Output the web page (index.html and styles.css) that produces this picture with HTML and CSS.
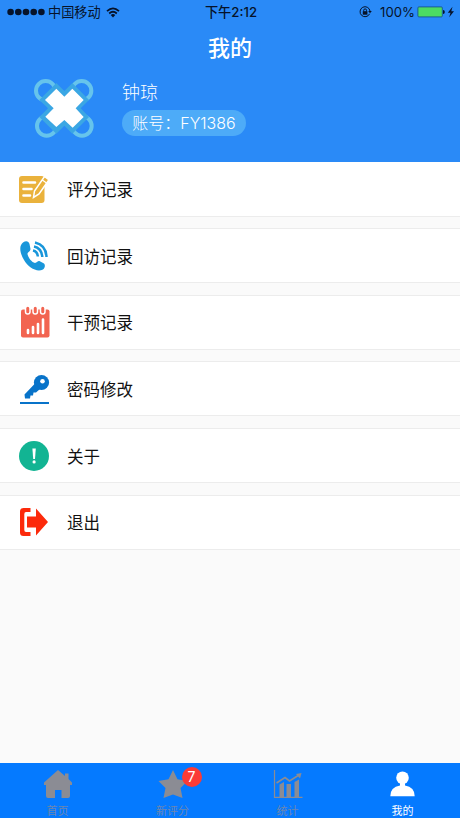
FILE: index.html
```html
<!DOCTYPE html>
<html lang="zh-CN">
<head>
<meta charset="utf-8">
<meta name="viewport" content="width=device-width, initial-scale=1">
<title>我的</title>
<link rel="stylesheet" href="styles.css">
</head>
<body>
<div class="app">
  <header class="header">
    <div class="status">
      <div class="status-left">
        <svg width="38" height="8" viewBox="0 0 38 8"><circle cx="3.6" cy="4" r="3.3"/><circle cx="11.3" cy="4" r="3.3"/><circle cx="19" cy="4" r="3.3"/><circle cx="26.7" cy="4" r="3.3"/><circle cx="34.4" cy="4" r="3.3"/></svg>
        <span class="carrier">中国移动</span>
        <svg class="wifi" width="14" height="11" viewBox="0 0 14 11"><path d="M1 4.2Q7-1.4 13 4.2M3.2 6.5Q7 3 10.8 6.5" fill="none" stroke="#06132a" stroke-width="1.7"/><path d="M4.7 8Q7 6.2 9.3 8L7 10.4Z"/></svg>
      </div>
      <span class="time">下午2:12</span>
      <div class="status-right">
        <svg width="13" height="12" viewBox="0 0 13 12"><path d="M10.6 7.8A5 5 0 1 1 11 5" fill="none" stroke="#06132a" stroke-width="1"/><path d="M9.2 5H12.8L11 7.2Z"/><rect x="3.8" y="5.2" width="4.6" height="3.5"/><path d="M4.7 5.5V4.3a1.4 1.4 0 0 1 2.8 0v1.2" fill="none" stroke="#06132a"/></svg>
        <span class="percent">100%</span>
        <svg width="38" height="12" viewBox="0 0 38 12"><rect x=".9" y=".9" width="24.4" height="10" rx="1" fill="#4cdb62" stroke="#17558e" stroke-width=".9"/><path d="M26 4Q27.8 4.2 27.8 6T26 8Z"/><path d="M35.5 .8 30.8 6.7H33.5L32.2 11.2 37 5.2H34.300Z"/></svg>
      </div>
    </div>
    <h1 class="title">我的</h1>
    <div class="profile">
      <svg class="avatar" width="68" height="68" viewBox="0 0 204 204">
        <g fill="none" stroke="#66c4ec" stroke-width="12"><circle cx="47" cy="50" r="29"/><circle cx="155" cy="50" r="29"/><circle cx="50" cy="156" r="29"/><circle cx="156" cy="156" r="29"/></g>
        <path d="M79 27 103 51 127 27 177 78 152 103 177 129 127 179 103 155 79 179 28 129 54 103 28 78Z" fill="#3ba7e4"/>
        <path d="M79 44 103 68 127 44 161 78 137 103 161 129 128 161 103 138 79 159 46 128 71 103 45 78Z" fill="#fff"/>
      </svg>
      <div class="identity">
        <div class="name">钟琼</div>
        <div class="account">账号：FY1386</div>
      </div>
    </div>
  </header>
  <main class="menu">
    <div class="row">
      <svg class="icon" viewBox="0 0 32 32"><rect x="1" y="3" width="25.500" height="27" rx="3" fill="#eab23c"/><path d="M5.500 9.5H17M5.500 16H13.5M5.500 22.5H12" stroke="#fff" stroke-width="2.6" stroke-linecap="round"/><path d="M26.500 3.500 31 6.800 21 21 15.500 24.500 16.500 18Z" fill="#eab23c" stroke="#fff" stroke-width="1.5"/><path d="M24 6.800 28.500 10" stroke="#fff" stroke-width="1.2"/></svg>
      <span>评分记录</span>
    </div>
    <div class="row">
      <svg class="icon" viewBox="0 0 32 32"><path d="M5 2.500C8 .5 10.500 1 11.500 4L12.500 9C12.500 11.500 9.500 12 9.500 14C10 17.500 14 22.500 17 23C19 23 19.500 20.500 21.800 21.200L26 23.500C27.500 25 27 28 25 29.500C18.500 32.500 10.500 27.500 6 20C1.500 12.500 1 5.500 5 2.500Z" fill="#1996da"/><g fill="none" stroke="#1996da" stroke-width="2.500"><path d="M15 10.500Q19.500 11.500 19.800 16.500"/><path d="M16 6.500Q23.500 8 24.300 17"/><path d="M17 2.500Q28 5 28.500 17"/></g></svg>
      <span>回访记录</span>
    </div>
    <div class="row">
      <svg class="icon" viewBox="0 0 32 32"><rect x="3" y="3.500" width="28.500" height="28" rx="2" fill="#f26450"/><g fill="#f26450" stroke="#fff" stroke-width="1.500"><rect x="7.500" y="0" width="4.500" height="8" rx="2.250"/><rect x="15" y="0" width="4.500" height="8" rx="2.250"/><rect x="22.500" y="0" width="4.500" height="8" rx="2.250"/></g><path d="M10 24V27M15 21V27M20 18V27M25 13.500V27" stroke="#fff" stroke-width="2.600" stroke-linecap="round"/></svg>
      <span>干预记录</span>
    </div>
    <div class="row">
      <svg class="icon" viewBox="0 0 32 32"><circle cx="23.500" cy="9.500" r="7.600" fill="#0873c9"/><path d="M17 10.500 6.500 21.500 7 25.500H12L12.500 22.500H15L15.500 19.500H18L22 16Z" fill="#0873c9"/><circle cx="24.500" cy="8.300" r="2.300" fill="#fff"/><path d="M2 30H31" stroke="#0873c9" stroke-width="2"/></svg>
      <span>密码修改</span>
    </div>
    <div class="row">
      <svg class="icon" viewBox="0 0 32 32"><circle cx="16" cy="16" r="15" fill="#12b493"/><path d="M14.400 8.500H17.800L17 19H15.200Z" fill="#fff"/><circle cx="16.100" cy="21.900" r="1.600" fill="#fff"/></svg>
      <span>关于</span>
    </div>
    <div class="row">
      <svg class="icon" viewBox="0 0 32 32"><path d="M12.500 2H5.500Q2 2 2 5.500V26.500Q2 30 5.500 30H12.500V26H8Q6.300 26 6.300 24V8Q6.300 6 8 6H12.500Z" fill="#fc2a0b"/><path d="M9 10.500H18V2.500L30 16 18 29.500V21.500H9Z" fill="#fc2a0b"/></svg>
      <span>退出</span>
    </div>
  </main>
  <nav class="tabs">
    <div class="tab">
      <svg width="30" height="30" viewBox="0 0 30 30"><path d="M15 1 22 7V4.500H25.500V10L29 13.500V16H27V27Q27 29 25 29H18.500V21H12V29H5Q3 29 3 27V16H1V13.500Z"/></svg>
      <span>首页</span>
    </div>
    <div class="tab">
      <div class="badge-anchor"><svg width="30" height="30" viewBox="0 0 30 30"><path d="M15 1 19.500 10.300 29.500 12 22.500 19 24.500 29 15 25.500 5.500 29 7.500 19 .5 12 10.500 10.300Z"/></svg><span class="badge">7</span></div>
      <span>新评分</span>
    </div>
    <div class="tab">
      <svg width="30" height="30" viewBox="0 0 30 30"><path d="M1.500 1V28.300H29.500" fill="none" stroke="#8b8c94" stroke-width="1.200"/><path d="M6.500 15.500 11 13V28H6.500ZM13.500 15H18V28H13.500ZM21.500 13 26 10.500V28H21.500Z"/><path d="M3.500 14 12 8.500 16.500 12 26 6" fill="none" stroke="#8b8c94" stroke-width="1.600"/><path d="M23 5 28.500 4 27 9.500Z"/></svg>
      <span>统计</span>
    </div>
    <div class="tab active">
      <svg width="30" height="30" viewBox="0 0 30 30"><circle cx="14.500" cy="8.800" r="6.300"/><path d="M12 13H17V16.500Q26.700 18 26.700 27.300H2.300Q2.300 18 12 16.500Z"/></svg>
      <span>我的</span>
    </div>
  </nav>
</div>
</body>
</html>
```
FILE: styles.css
```css
* { box-sizing: border-box; }
body { margin: 0; font-family: Inter, "Noto Sans CJK SC", sans-serif; }
svg { display: block; flex: none; }
.app { width: 460px; height: 818px; display: flex; flex-direction: column; background: #fafafa; }
.header { height: 161.5px; background: #2a8af7; color: #fff; flex: none; }
.status { height: 24px; padding: 0 5px 0 7px; display: grid; grid-template-columns: 1fr auto 1fr; align-items: center; color: #06132a; fill: #06132a; font-size: 13.2px; line-height: 24px; }
.status-left, .status-right { display: flex; align-items: center; }
.status-right { justify-content: flex-end; }
.carrier { margin-left: 3px; }
.wifi { margin-left: 5px; }
.time { font-weight: 500; }
.percent { margin: 0 2px 0 8px; }
.title { margin: 0; height: 50px; font-size: 22px; line-height: 48px; font-weight: 500; text-align: center; }
.profile { display: flex; padding-left: 30px; }
.identity { margin: 7px 0 0 24px; }
.name { font-size: 18px; line-height: 24px; font-weight: 300; }
.account { width: 124px; height: 26px; margin-top: 5px; border-radius: 13px; background: #4dabf8; font-size: 16px; font-weight: 300; line-height: 26px; text-align: center; white-space: nowrap; }
.menu { flex: 1; display: flex; flex-direction: column; gap: 11.67px; }
.row { height: 55px; flex: none; display: flex; align-items: center; gap: 17px; padding-left: 18px; background: #fff; border-bottom: 1px solid #ececec; font-size: 16.5px; color: #111; }
.row + .row { border-top: 1px solid #ececec; }
.icon { width: 32px; height: 32px; }
.tabs { height: 55px; flex: none; display: grid; grid-template-columns: repeat(4, 1fr); background: #057aff; }
.tab { display: flex; flex-direction: column; align-items: center; padding-top: 6px; font-size: 11px; line-height: 24px; color: #6c86b0; fill: #8b8c94; }
.tab.active { color: #fff; fill: #fff; }
.badge-anchor { position: relative; }
.badge { position: absolute; left: 24px; top: -2px; width: 20px; height: 20px; border-radius: 50%; background: #fb3b36; color: #fff; font-size: 14px; line-height: 20px; text-align: center; }
```
